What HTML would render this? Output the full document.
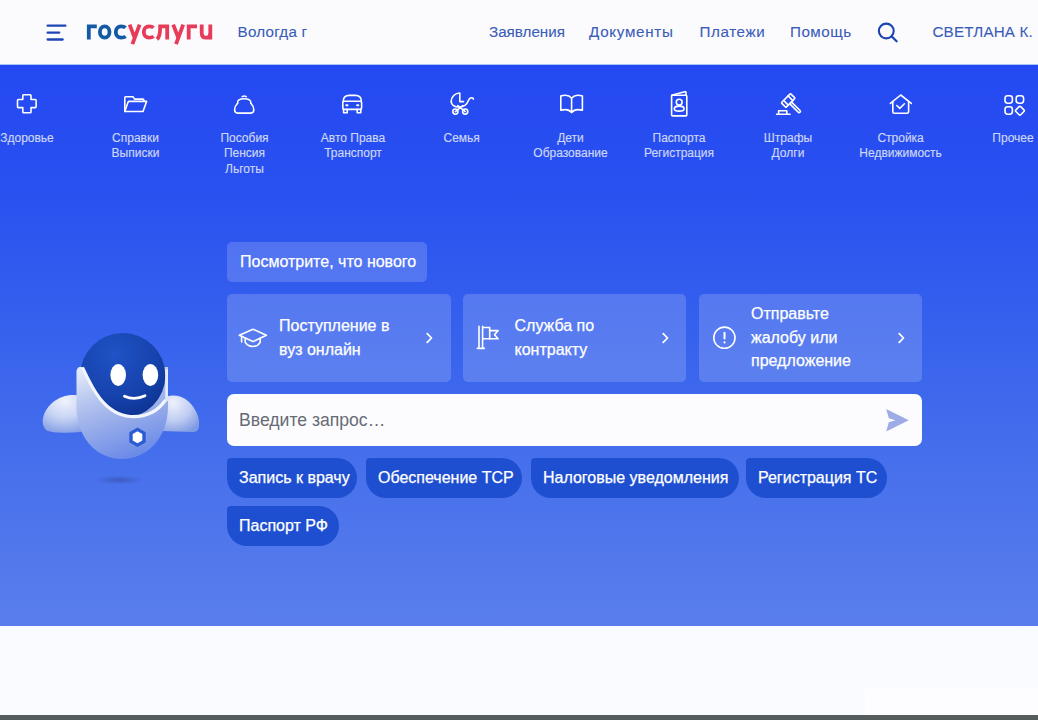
<!DOCTYPE html>
<html lang="ru">
<head>
<meta charset="utf-8">
<title>Госуслуги</title>
<style>
*{margin:0;padding:0;box-sizing:border-box}
html,body{width:1038px;height:720px;overflow:hidden;background:#f9fbfe;font-family:"Liberation Sans",sans-serif}
.a{position:absolute}
#hdr{position:absolute;left:0;top:0;width:1038px;height:64px;background:#fbfbfd}
.nav{position:absolute;top:22px;font-size:15.2px;line-height:20px;color:#3a5cb9;white-space:nowrap;-webkit-text-stroke:0.1px #3a5cb9}
#band{position:absolute;left:0;top:65px;width:1038px;height:561px;background:linear-gradient(180deg,#2449f2 0%,#2950f0 22%,#3661ed 47%,#4770ec 72%,#5a7eec 100%)}
.lb{position:absolute;top:130.5px;width:120px;margin-left:-60px;text-align:center;font-size:12px;line-height:15.5px;color:#cdd7f7;white-space:nowrap;-webkit-text-stroke:0.15px #cdd7f7}
.ic{position:absolute;overflow:visible}
.pill{position:absolute;left:227px;top:242px;width:200px;height:40px;border-radius:5px;background:rgba(255,255,255,.17);color:#fff;font-size:16px;line-height:40px;padding-left:13px;white-space:nowrap;-webkit-text-stroke:0.25px #fff}
.card{position:absolute;top:294px;width:223.5px;height:88px;border-radius:5px;background:rgba(255,255,255,.17)}
.tx{position:absolute;color:#fff;font-size:16px;line-height:23.6px;white-space:nowrap;-webkit-text-stroke:0.25px #fff}
#search{position:absolute;left:227px;top:394px;width:695px;height:52px;border-radius:7px;background:#fcfcfe}
.chip{position:absolute;height:40px;border-radius:4px 20px 20px 20px;background:#1e4fd0;color:#fff;font-size:16px;line-height:40px;padding-left:12px;white-space:nowrap;-webkit-text-stroke:0.25px #fff}
</style>
</head>
<body>
<div id="hdr">
  <svg class="a" style="left:0;top:0" width="70" height="64" viewBox="0 0 70 64">
    <rect x="46.5" y="24.4" width="20" height="2.4" rx="1.1" fill="#1c45b6"/>
    <rect x="46.5" y="31.4" width="13.8" height="2.4" rx="1.1" fill="#1c45b6"/>
    <rect x="46.5" y="38.3" width="17.3" height="2.4" rx="1.1" fill="#1c45b6"/>
  </svg>
  <svg class="a" style="left:0;top:0" width="230" height="60" viewBox="0 0 230 60" fill="none" stroke-width="3.8">
    <g stroke="#135aa6">
      <path d="M88.8 39.6V26.4H96.8"/>
      <ellipse cx="104.7" cy="32" rx="4.8" ry="5.7"/>
      <path d="M125.6 27.6C124.5 26.7 122.9 26.3 121.1 26.3C117.8 26.3 115.8 28.8 115.8 32C115.8 35.2 117.8 37.7 121.1 37.7C122.9 37.7 124.5 37.3 125.6 36.4"/>
    </g>
    <g stroke="#e73b59">
      <path d="M129.6 24.6L134.6 37.6M139.6 24.6L132.4 44.2"/>
      <path d="M153.6 27.6C152.5 26.7 150.9 26.3 149.1 26.3C145.8 26.3 143.8 28.8 143.8 32C143.8 35.2 145.8 37.7 149.1 37.7C150.9 37.7 152.5 37.3 153.6 36.4"/>
      <path d="M157 39.2C159.8 37 160.2 33 160.2 26.4H167.2V39.6"/>
      <path d="M173.2 24.6L178.2 37.6M183.2 24.6L176 44.2"/>
      <path d="M188.7 39.6V26.4H197"/>
      <path d="M201.7 24.6V32.4C201.7 35.9 203.4 37.7 206 37.7C208.6 37.7 210.3 35.9 210.3 32.4V24.6M210.3 30V39.6"/>
    </g>
  </svg>
  <div class="nav" style="left:237.5px;letter-spacing:0.25px">Вологда г</div>
  <div class="nav" style="left:489px;letter-spacing:0px">Заявления</div>
  <div class="nav" style="left:589px;letter-spacing:0.7px">Документы</div>
  <div class="nav" style="left:699.5px;letter-spacing:0.6px">Платежи</div>
  <div class="nav" style="left:790px;letter-spacing:0.5px">Помощь</div>
  <svg class="a" style="left:0;top:0" width="1038" height="64" viewBox="0 0 1038 64">
    <circle cx="886.3" cy="31" r="7.4" fill="none" stroke="#1c43b2" stroke-width="2.1"/>
    <line x1="891.8" y1="36.5" x2="896.6" y2="41.3" stroke="#1c43b2" stroke-width="2.3" stroke-linecap="round"/>
  </svg>
  <div class="nav" style="left:932.5px;letter-spacing:0.15px">СВЕТЛАНА К.</div>
</div>
<div class="a" style="left:0;top:64px;width:1038px;height:1px;background:#a9c6f6"></div>

<div id="band"></div>

<!-- category icons (page coordinates) -->
<svg class="a" style="left:0;top:0" width="1038" height="130" viewBox="0 0 1038 130" fill="none" stroke="#fff" stroke-width="1.6" stroke-linejoin="round" stroke-linecap="round">
  <!-- cross -->
  <path d="M23.6 94.8h6.6q.8 0 .8.8v3.9h4.3q.8 0 .8.8v6.5q0 .8-.8.8h-4.3v4.4q0 .8-.8.8h-6.6q-.8 0-.8-.8v-4.4h-4.5q-.8 0-.8-.8v-6.5q0-.8.8-.8h4.5v-3.9q0-.8.8-.8z"/>
  <!-- folder -->
  <path d="M124.8 111.5V97.6q0-.8.8-.8h7.4l1.6 2.3h8.4q.8 0 .8.8v1.3"/>
  <path d="M124.8 111.5l3.3-9.4q.3-.7 1-.7h17.5l-3.6 10.1z"/>
  <!-- purse -->
  <path d="M242.2 96.6q2-1.3 4 0"/>
  <path d="M237.6 103.3q-.6-4.6 6.6-4.6t6.6 4.6"/>
  <path d="M237.6 103.3q-3 3-3 6.5q0 3.3 3 3.3h13.2q3 0 3-3.3q0-3.5-3-6.5"/>
  <!-- car -->
  <path d="M343.2 101.2Q343.4 95.4 349.2 95.4H355.4Q361.2 95.4 361.4 101.2"/>
  <rect x="342.8" y="101.2" width="18.8" height="8.2" rx="1.5"/>
  <path d="M343.6 109.4v3.4h3.6v-3.4M357.2 109.4v3.4h3.6v-3.4"/>
  <path d="M346.3 105.2h1.2M357.1 105.2h1.2" stroke-width="1.9"/>
  <!-- stroller -->
  <path d="M459.8 93A8.6 8.6 0 0 0 451.2 101.6M459.8 93V101.6H463.5"/>
  <path d="M451.2 101.6C451.5 105 454.5 107 459.2 107C464.5 107 467 104.5 468.4 100.6C469.2 98.5 470.4 97.7 471.8 97.7C472.8 97.7 473.4 98.4 473.4 99.2"/>
  <circle cx="455.4" cy="111.6" r="2.6"/>
  <circle cx="465.2" cy="111.6" r="2.6"/>
  <path d="M455.4 111.6L462.8 105.6M465.2 111.6L457.8 105.6"/>
  <!-- book -->
  <path d="M571.6 98q-2.6-2.8-6-2.8q-2.9 0-4.8.8v14.2q1.9-.6 4.8-.6q3.5 0 6 2.9q2.5-2.9 6-2.9q2.9 0 4.8.6V96q-1.9-.8-4.8-.8q-3.4 0-6 2.8z"/>
  <path d="M571.6 98v14.5"/>
  <!-- passport -->
  <path d="M671.6 95.3l13.2-3.6q1.2-.3 1.2 1v2.6"/>
  <rect x="671.6" y="95.3" width="15.2" height="20.6" rx="1"/>
  <circle cx="679.2" cy="102.2" r="2.9"/>
  <path d="M674.3 108.7q0-2.6 4.9-2.6t4.9 2.6q0 2.4-4.9 2.4t-4.9-2.4z"/>
  <!-- gavel -->
  <g transform="translate(788.2 100.5) rotate(-45)">
    <rect x="-6.5" y="-3.3" width="13" height="6.6" rx="0.8"/>
    <path d="M-3.2 -3.3V3.3M3.2 -3.3V3.3"/>
    <rect x="-1.25" y="3.3" width="2.5" height="13.4" rx="1.25"/>
  </g>
  <path d="M776.6 114.2H790M778.6 114.2V110.7H786.8V114.2"/>
  <!-- house -->
  <path d="M890.4 103.4l10.3-8.4 10.6 8.4"/>
  <path d="M892.8 101.5v10.2q0 1.6 1.6 1.6h12.6q1.6 0 1.6-1.6v-10.2"/>
  <path d="M896.8 105.5l3 2.9 4.6-4.6"/>
  <!-- grid -->
  <rect x="1005" y="95.8" width="7.4" height="7.4" rx="2.6"/>
  <rect x="1016.2" y="95.8" width="7.4" height="7.4" rx="2.6"/>
  <rect x="1005" y="106.8" width="7.4" height="7.4" rx="2.6"/>
  <path d="M1019.1 106.6q.8-.8 1.6 0l3.2 3.3q.8.8 0 1.6l-3.2 3.3q-.8.8-1.6 0l-3.2-3.3q-.8-.8 0-1.6z"/>
</svg>

<div class="lb" style="left:27px">Здоровье</div>
<div class="lb" style="left:135.5px">Справки<br>Выписки</div>
<div class="lb" style="left:244.5px">Пособия<br>Пенсия<br>Льготы</div>
<div class="lb" style="left:353px">Авто Права<br>Транспорт</div>
<div class="lb" style="left:461.7px">Семья</div>
<div class="lb" style="left:570.5px">Дети<br>Образование</div>
<div class="lb" style="left:679px">Паспорта<br>Регистрация</div>
<div class="lb" style="left:788px">Штрафы<br>Долги</div>
<div class="lb" style="left:900.6px">Стройка<br>Недвижимость</div>
<div class="lb" style="left:1013px">Прочее</div>

<!-- robot -->
<svg class="a" style="left:0;top:300px" width="230" height="200" viewBox="0 0 230 200">
  <defs>
    <linearGradient id="bodyg" x1="0.2" y1="0" x2="0.55" y2="1">
      <stop offset="0" stop-color="#e2e9f9"/>
      <stop offset="0.3" stop-color="#b8c7f0"/>
      <stop offset="0.62" stop-color="#94aae9"/>
      <stop offset="1" stop-color="#6a8ae8"/>
    </linearGradient>
    <radialGradient id="armL" cx="50%" cy="15%" r="90%">
      <stop offset="0" stop-color="#f0f3fc"/>
      <stop offset="0.5" stop-color="#c9d5f4"/>
      <stop offset="1" stop-color="#839ee5"/>
    </radialGradient>
    <radialGradient id="armR" cx="30%" cy="20%" r="90%">
      <stop offset="0" stop-color="#eef2fc"/>
      <stop offset="0.55" stop-color="#c0cdf2"/>
      <stop offset="1" stop-color="#7f9ae4"/>
    </radialGradient>
    <radialGradient id="headg" cx="40%" cy="25%" r="80%">
      <stop offset="0" stop-color="#2053c6"/>
      <stop offset="0.6" stop-color="#1643ad"/>
      <stop offset="1" stop-color="#0d3290"/>
    </radialGradient>
    <radialGradient id="shad" cx="50%" cy="50%" r="50%">
      <stop offset="0" stop-color="#3448a0" stop-opacity=".55"/>
      <stop offset="1" stop-color="#3448a0" stop-opacity="0"/>
    </radialGradient>
    <clipPath id="faceclip">
      <path d="M30 0V67L82.5 67C92 88 104 114 130 116.5C146 117.5 158 111 165.5 100L200 100V0Z"/>
    </clipPath>
  </defs>
  <ellipse cx="119" cy="180" rx="24" ry="4.5" fill="url(#shad)"/>
  <!-- left arm -->
  <path d="M46 130C40 124 42 112 52 103C60 96 70 94 78 95.5C84 97 87 100 87 104L87 131C76 133 52 134 46 130Z" fill="url(#armL)"/>
  <!-- right arm -->
  <path d="M162 99C168 94 180 94 188 101C196 108 200 118 199 126C198.5 131 196 132 192 132L162 131Z" fill="url(#armR)"/>
  <!-- body -->
  <path d="M76.5 71q1-5 6-4L168 67V106C168 137 148 159 122 159S76.5 137 76.5 106Z" fill="url(#bodyg)"/>
  <!-- head / face -->
  <circle cx="122.8" cy="75.5" r="42.6" fill="url(#headg)" clip-path="url(#faceclip)"/>
  <!-- hood rim -->
  <path d="M82.5 67.5C92 88 104 114 130 116.5C146 117.5 158 111 165.5 100" fill="none" stroke="#f2f5fd" stroke-width="3.2"/>
  <path d="M166.6 69.5V101" fill="none" stroke="#e6ecfb" stroke-width="2.6"/>
  <!-- eyes -->
  <ellipse cx="118.2" cy="75" rx="7.8" ry="11" fill="#fff"/>
  <ellipse cx="150.4" cy="75" rx="7.8" ry="11" fill="#fff"/>
  <!-- smile -->
  <path d="M124.5 96.2q10 4.5 20.5-.5" fill="none" stroke="#fff" stroke-width="2.8" stroke-linecap="round"/>
  <!-- hex button -->
  <path d="M137.5 127.5l8.2 4.8v10l-8.2 4.8-8.2-4.8v-10z" fill="#2a5ad4"/>
  <path d="M137.5 131.3l4.8 2.8v6.4l-4.8 2.8-4.8-2.8v-6.4z" fill="#fff"/>
</svg>

<div class="pill">Посмотрите, что нового</div>

<div class="card" style="left:227px"></div>
<div class="card" style="left:462.5px"></div>
<div class="card" style="left:698.5px"></div>

<svg class="a" style="left:0;top:290px" width="1038" height="100" viewBox="0 290 1038 100" fill="none" stroke="#fff" stroke-width="1.6" stroke-linejoin="round" stroke-linecap="round">
  <!-- cap -->
  <path d="M239.3 335.3L253 329.2l13.4 6.1L253 341.6z"/>
  <path d="M245.2 338.1v4.2q2.8 4.2 7.6 4.2t7.4-4.2v-4.2"/>
  <path d="M241.6 336.4v5.6"/>
  <!-- flag -->
  <path d="M479 326.4v22M482.6 326.4v22M477.3 348.4h7"/>
  <path d="M482.6 327.5h7.1v11.2h-7.1"/>
  <path d="M489.7 330.6h8.4l-3.6 4.1 3.6 4.1h-8.4"/>
  <!-- exclamation -->
  <circle cx="724.4" cy="337.7" r="10.6"/>
  <path d="M724.5 332.8v5.8" stroke-width="2"/>
  <circle cx="724.5" cy="342.4" r="1.1" fill="#fff" stroke="none"/>
  <!-- chevrons -->
  <path d="M427.2 333.6l4.3 4.4-4.3 4.4M663.2 333.6l4.3 4.4-4.3 4.4M899.2 333.6l4.3 4.4-4.3 4.4" stroke-width="1.7"/>
</svg>

<div class="tx" style="left:279px;top:314.4px">Поступление в<br>вуз онлайн</div>
<div class="tx" style="left:514.5px;top:314.4px">Служба по<br>контракту</div>
<div class="tx" style="left:751px;top:302px">Отправьте<br>жалобу или<br>предложение</div>

<div id="search"></div>
<div class="a" style="left:239px;top:409.8px;font-size:17.6px;line-height:20px;color:#666b74;white-space:nowrap">Введите запрос…</div>
<svg class="a" style="left:880px;top:404px" width="34" height="32" viewBox="880 404 34 32">
  <path d="M886.2 409.1L908.8 420.3L886.2 431.6L888.8 422.3L895.4 420.3L888.8 418.3Z" fill="#9dabe6"/>
</svg>

<div class="chip" style="left:227px;top:458px;width:130px">Запись к врачу</div>
<div class="chip" style="left:366px;top:458px;width:156px">Обеспечение ТСР</div>
<div class="chip" style="left:531px;top:458px;width:208px">Налоговые уведомления</div>
<div class="chip" style="left:746px;top:458px;width:141px">Регистрация ТС</div>
<div class="chip" style="left:227px;top:506px;width:112px">Паспорт РФ</div>

<div class="a" style="left:865px;top:689px;width:173px;height:26px;background:#fdfdff"></div>
<div class="a" style="left:0;top:715px;width:1038px;height:5px;background:#545c5e"></div>
</body>
</html>
